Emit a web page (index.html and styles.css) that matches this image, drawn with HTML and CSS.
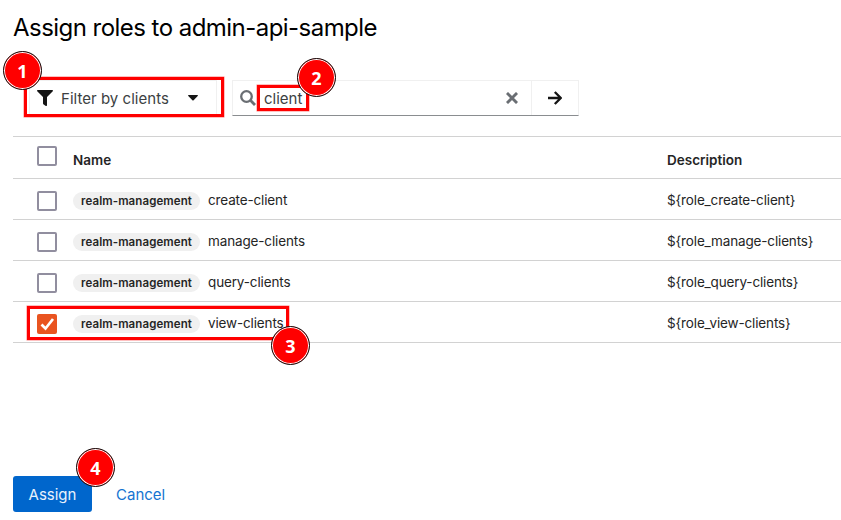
FILE: index.html
```html
<!DOCTYPE html>
<html lang="en">
<head>
<meta charset="utf-8">
<title>Assign roles</title>
<link rel="stylesheet" href="styles.css">
</head>
<body>
<main class="dialog">
  <h1 class="title">Assign roles to admin-api-sample</h1>
  <div class="toolbar">
    <div class="filter">
      <svg class="funnel" width="16" height="16" viewBox="0 0 512 512"><path fill="#151515" d="M488 0H24C3 0-8 26 7 41l185 185v206c0 8 4 15 10 20l80 56c16 11 38 0 38-20V226L505 41c15-15 4-41-17-41z"/></svg>
      <span class="filter-text">Filter by clients</span>
      <svg class="caret" width="10" height="6" viewBox="0 0 10 6"><path fill="#151515" d="M.6 0h8.8q.9.2.3 1L5.6 5.2q-.6.5-1.2 0L.3 1Q-.3.2.6 0z"/></svg>
    </div>
    <div class="search">
      <svg class="glass" width="16" height="16" viewBox="0 0 16 16" fill="none" stroke="#6a6e73"><circle cx="6.5" cy="6.5" r="5.3" stroke-width="2.3"/><path d="M10.6 10.6l4.4 4.4" stroke-width="2.8"/></svg>
      <span class="query">client</span>
      <svg class="clear" width="12" height="12" viewBox="0 0 12 12"><path d="M2 2l8 8M10 2l-8 8" stroke="#6a6e73" stroke-width="2.9" stroke-linecap="square"/></svg>
      <div class="go"><svg width="14" height="14" viewBox="0 0 14 14"><path d="M0 7h12.2M6.8 1l6 6-6 6" fill="none" stroke="#151515" stroke-width="2.4" stroke-linejoin="round"/></svg></div>
    </div>
  </div>
  <div class="table">
    <div class="row head"><i class="box"></i><b class="name">Name</b><b class="desc">Description</b></div>
    <div class="row"><i class="box"></i><span class="name"><span class="badge">realm-management</span><span class="role">create-client</span></span><span class="desc">${role_create-client}</span></div>
    <div class="row"><i class="box"></i><span class="name"><span class="badge">realm-management</span><span class="role">manage-clients</span></span><span class="desc">${role_manage-clients}</span></div>
    <div class="row"><i class="box"></i><span class="name"><span class="badge">realm-management</span><span class="role">query-clients</span></span><span class="desc">${role_query-clients}</span></div>
    <div class="row"><i class="box checked"><svg width="20" height="20" viewBox="0 0 20 20"><path d="M4.5 10.5l4 4 7.5-9.5" fill="none" stroke="#fff" stroke-width="2.7"/></svg></i><span class="name"><span class="badge">realm-management</span><span class="role">view-clients</span></span><span class="desc">${role_view-clients}</span></div>
  </div>
  <div class="actions"><span class="assign">Assign</span><span class="cancel">Cancel</span></div>
</main>
<div class="mark m1"></div><div class="mark m2"></div><div class="mark m3"></div>
<div class="pin p1">1</div><div class="pin p2">2</div><div class="pin p3">3</div><div class="pin p4">4</div>
</body>
</html>
```
FILE: styles.css
```css
* { box-sizing: border-box; }
body { margin: 0; width: 841px; height: 520px; position: relative; overflow: hidden; background: #fff; color: #151515; font-family: Inter, "Liberation Sans", sans-serif; font-size: 13.5px; white-space: nowrap; }
svg { display: block; flex: none; }
.dialog { padding-left: 13px; }
.title { margin: 0; padding-top: 12px; height: 80px; font-size: 24px; line-height: 31px; font-weight: 400; letter-spacing: -.54px; color: #000; }
.toolbar { display: flex; height: 36px; padding-left: 16px; gap: 15px; }
.filter { width: 188px; border: 1px solid #f0f0f0; display: flex; align-items: center; padding-left: 7px; color: #3c3f42; font-size: 15px; }
.filter-text { width: 108px; margin-left: 8px; letter-spacing: .03px; }
.caret { margin-left: 19px; }
.search { width: 347px; border: 1px solid #f0f0f0; border-bottom-color: #8a8d90; display: flex; align-items: center; padding-left: 7px; font-size: 15px; }
.query { margin-left: 8px; width: 242px; color: #3c3f42; }
.clear { margin-right: 13px; }
.go { width: 47px; height: 34px; border-left: 1px solid #f0f0f0; display: flex; align-items: center; padding-left: 16px; }
.table { margin-top: 20px; border-top: 1px solid #d2d2d2; }
.row { height: 41px; border-bottom: 1px solid #d2d2d2; display: flex; align-items: center; padding-left: 24px; }
.head { height: 42px; }
.head b { font-weight: 600; padding-top: 5px; }
.box { flex: none; width: 20px; height: 20px; border: 2px solid #918e9f; border-radius: 2px; margin-top: 3px; }
.head .box { margin: 0 0 3px; }
.checked { border: 0; background: #e95420; }
.name { width: 594px; margin-left: 16px; display: flex; align-items: center; }
.badge { width: 127px; height: 18px; margin: 3px 8px 0 0; border-radius: 9px; background: #f0f0f0; text-align: center; font-size: 11.5px; line-height: 18px; font-weight: 600; letter-spacing: .1px; }
.role { padding-top: 2px; letter-spacing: -.14px; }
.desc, .name { color: #252525; }
span.desc { padding-top: 2px; letter-spacing: -.15px; }
.actions { margin-top: 133px; display: flex; height: 36px; align-items: center; font-size: 15px; }
.assign { width: 79px; height: 36px; line-height: 37px; text-align: center; border-radius: 3px; background: #06c; color: #e8f2fc; }
.cancel { margin-left: 24px; color: #1674d1; }
.mark { position: absolute; border: 3px solid #f00; box-shadow: 0 0 0 .5px #ff8080; }
.m1 { left: 24px; top: 77px; width: 200px; height: 40px; }
.m2 { left: 257px; top: 85px; width: 52px; height: 26px; }
.m3 { left: 27px; top: 306px; width: 262px; height: 34px; }
.pin { position: absolute; width: 39px; height: 39px; border-radius: 50%; border: 1px solid #111; background: #f00; box-shadow: inset 0 0 0 1px #fff; color: #fff; font: 700 18px/38px "Noto Sans", sans-serif; text-align: center; }
.p1 { left: 3px; top: 51px; }
.p2 { left: 297px; top: 58px; }
.p3 { left: 271px; top: 326px; }
.p4 { left: 76px; top: 448px; }
```
